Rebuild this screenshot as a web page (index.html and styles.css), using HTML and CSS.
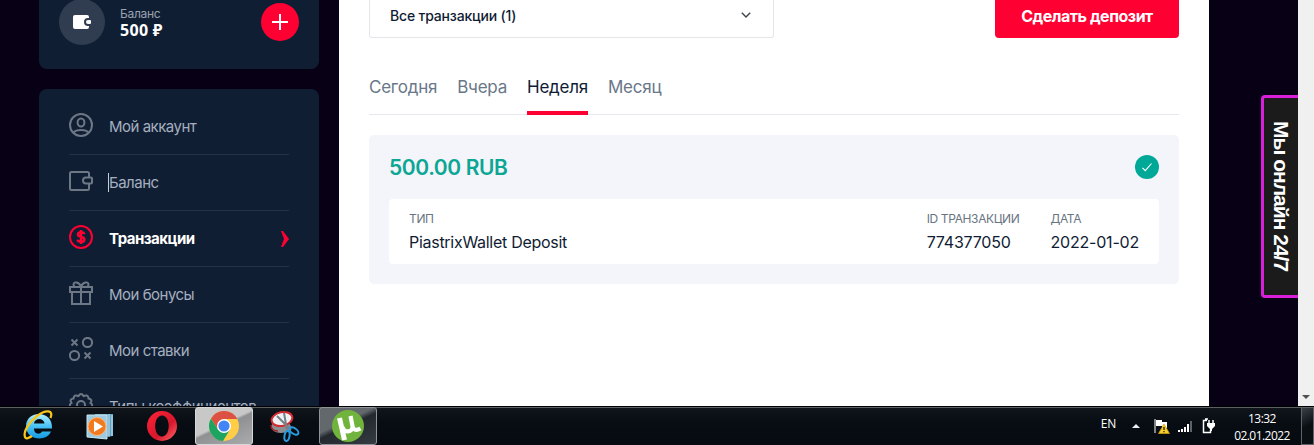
FILE: index.html
```
<!DOCTYPE html>
<html lang="ru">
<head>
  <meta charset="UTF-8">
  <meta name="viewport" content="width=device-width, initial-scale=1.0">
  <title>Транзакции</title>
  <link rel="stylesheet" href="styles.css">
</head>
<body>
  <div class="browser">
    <div class="page">
      <aside class="sidebar">
        <div class="balance">
          <div class="balance-icon">
            <svg width="18" height="14" viewBox="0 0 18 14">
              <path d="M2 0H14Q16 0 16 2V3H15A4 4 0 0 0 15 11H16V12Q16 14 14 14H2Q0 14 0 12V2Q0 0 2 0Z" fill="#fff"/>
              <path d="M15 5H17Q18 5 18 6V8Q18 9 17 9H15A2 2 0 0 1 15 5Z" fill="#fff"/>
            </svg>
          </div>
          <div class="balance-info">
            <span class="balance-label">Баланс</span>
            <span class="balance-value">500 ₽</span>
          </div>
          <button class="balance-add">
            <svg width="16" height="16" viewBox="0 0 16 16"><path d="M8 0V16M0 8H16" stroke="#fff" stroke-width="2"/></svg>
          </button>
        </div>
        <nav class="menu">
          <a class="menu-item">
            <svg class="menu-icon" viewBox="0 0 24 24">
              <circle cx="12" cy="12" r="11"/>
              <ellipse cx="12" cy="9.5" rx="3.4" ry="4"/>
              <path d="M4.5 19.5C7 16 17 16 19.5 19.5"/>
            </svg>
            <span>Мой аккаунт</span>
          </a>
          <a class="menu-item">
            <svg class="menu-icon" viewBox="0 0 24 24">
              <path d="M20 8V4.5Q20 3 18.500 3H2.500Q1 3 1 4.500V19.500Q1 21 2.500 21H18.500Q20 21 20 19.500V15"/>
              <path d="M17 8.500H22Q23 8.500 23 9.500V13.500Q23 14.500 22 14.500H17A3 3 0 0 1 17 8.500Z"/>
            </svg>
            <span class="caret">Баланс</span>
          </a>
          <a class="menu-item active">
            <svg class="menu-icon" viewBox="0 0 24 24">
              <circle cx="12" cy="12" r="11"/>
              <path class="dollar" d="M15.200 9.200C15 7.800 13.700 7.200 12 7.200C10.200 7.200 8.900 8 8.900 9.500C8.900 13 15.400 10.800 15.400 14.400C15.400 16 13.900 16.800 12 16.800C10.200 16.800 8.800 16.100 8.600 14.600M12 5V19"/>
            </svg>
            <span>Транзакции</span>
            <svg class="menu-arrow" width="8" height="16" viewBox="0 0 8 16"><path d="M0 0H2L8 8L2 16H0L3 8Z" fill="#ff0033"/></svg>
          </a>
          <a class="menu-item">
            <svg class="menu-icon" viewBox="0 0 24 24">
              <path d="M1 6H23V11H1ZM3 11V23H21V11M12 6V23"/>
              <path d="M12 5.500C10 1 5 .3 4.500 3.200C4.300 4.500 5 5.300 6 6M12 5.500C14 1 19 .3 19.500 3.200C19.700 4.500 19 5.300 18 6"/>
            </svg>
            <span>Мои бонусы</span>
          </a>
          <a class="menu-item">
            <svg class="menu-icon" viewBox="0 0 24 24">
              <circle cx="18.500" cy="5.500" r="4.600"/>
              <circle cx="5.500" cy="18.500" r="4.600"/>
              <path d="M2.500 2.500L8.500 8.500M8.500 2.500L2.500 8.500M15.500 15.500L21.500 21.500M21.500 15.500L15.500 21.500"/>
            </svg>
            <span>Мои ставки</span>
          </a>
          <a class="menu-item">
            <svg class="menu-icon" viewBox="0 0 24 24">
              <path d="M9.500 3Q12 -1 14.500 3Q19.500 1 19.500 5.500Q24 6.500 21.500 10Q25 12 21.500 14.500Q23 19 19 19Q17 23 14 21Q12 25 9.500 21Q5 23 5 19Q0 18 2.500 14.500Q-1 12 2.500 10Q0 6 4.500 5.500Q5 1 9.500 3Z"/>
              <circle cx="12" cy="12" r="4"/>
            </svg>
            <span>Типы коэффициентов</span>
          </a>
        </nav>
      </aside>

      <main class="content">
        <div class="toolbar">
          <div class="select">
            <span>Все транзакции (1)</span>
            <svg width="10" height="6" viewBox="0 0 10 6"><path d="M.8 .8L5 5L9.200 .8" fill="none" stroke="#3c434b" stroke-width="1.400"/></svg>
          </div>
          <button class="deposit">Сделать депозит</button>
        </div>
        <div class="tabs">
          <a class="tab">Сегодня</a>
          <a class="tab">Вчера</a>
          <a class="tab selected">Неделя</a>
          <a class="tab">Месяц</a>
        </div>
        <section class="transaction">
          <div class="transaction-head">
            <span class="amount">500.00 RUB</span>
            <svg width="24" height="24" viewBox="0 0 24 24">
              <circle cx="12" cy="12" r="12" fill="#00a997"/>
              <path d="M7.500 12.800L10.300 15.600L16.500 8.500" fill="none" stroke="#fff" stroke-width="1.100"/>
            </svg>
          </div>
          <div class="details">
            <div class="detail detail-type"><span class="detail-label">ТИП</span><span class="detail-value">PiastrixWallet Deposit</span></div>
            <div class="detail detail-id"><span class="detail-label">ID ТРАНЗАКЦИИ</span><span class="detail-value">774377050</span></div>
            <div class="detail"><span class="detail-label">ДАТА</span><span class="detail-value">2022-01-02</span></div>
          </div>
        </section>
      </main>

      <div class="chat">Мы онлайн 24/7</div>
    </div>
    <div class="scrollbar">
      <svg width="8" height="4" viewBox="0 0 8 4"><path d="M0 0H8L4 4Z" fill="#505050"/></svg>
    </div>
  </div>

  <footer class="taskbar">
    <div class="apps">
      <div class="app">
        <svg width="34" height="34" viewBox="1 1 34 34">
          <defs>
            <linearGradient id="ie" x1="0" y1="0" x2="0" y2="1"><stop offset="0" stop-color="#b5efff"/><stop offset=".5" stop-color="#48c1f5"/><stop offset="1" stop-color="#159be0"/></linearGradient>
          </defs>
          <path d="M31 23.500C27 34 6 33 6 18C6 2 33 1 32 20.500H14C14 26.500 20 27 22 23.500ZM14 15.500H24.500C24 9.500 14.500 9.500 14 15.500Z" fill="url(#ie)" fill-rule="evenodd"/>
          <path d="M30.500 10C34 2 26 1 17 8C9 14 3 24 5 29C6 31.500 9 30 12 28" fill="none" stroke="#f7c51b" stroke-width="2.300"/>
        </svg>
      </div>
      <div class="app">
        <svg width="30" height="30" viewBox="0 0 30 30">
          <path d="M10 3H28V25L10 27Z" fill="#659fc0"/>
          <path d="M24 3V26M27 4V25" stroke="#c5e9f7" stroke-width="1"/>
          <path d="M2 4H22V28L2 26Z" fill="#9acbe2" stroke="#c8e5ef"/>
          <circle cx="12" cy="15.500" r="9" fill="#f17a20" stroke="#ffb576"/>
          <path d="M9 10L18 15.500L9 21Z" fill="#fff"/>
        </svg>
      </div>
      <div class="app">
        <svg width="30" height="30" viewBox="0 0 30 30">
          <defs><linearGradient id="opera" x1="0" y1="0" x2="1" y2="1"><stop offset="0" stop-color="#ff2339"/><stop offset=".6" stop-color="#d6172b"/><stop offset="1" stop-color="#ff6b6b"/></linearGradient></defs>
          <path d="M15 0A15 15 0 0 0 15 30A15 15 0 0 0 15 0ZM15 4.500C24 4.500 24 25.500 15 25.500C6 25.500 6 4.500 15 4.500Z" fill="url(#opera)" fill-rule="evenodd"/>
        </svg>
      </div>
      <div class="app app-open">
        <svg width="30" height="30" viewBox="0 0 30 30">
          <circle cx="15" cy="15" r="15" fill="#ffcd46"/>
          <path d="M15 8H28.300A15 15 0 0 0 2 7.500L9 18.500L15 8Z" fill="#dd5145"/>
          <path d="M2 7.500A15 15 0 0 0 14 30L21 18.500H9Z" fill="#1da462"/>
          <circle cx="15" cy="15" r="7" fill="#fff"/>
          <circle cx="15" cy="15" r="5.600" fill="#4285f4"/>
        </svg>
      </div>
      <div class="app">
        <svg width="30" height="32" viewBox="0 0 30 32">
          <ellipse cx="11" cy="17" rx="10" ry="6" fill="#8c8f92"/>
          <path d="M1 15C1 18 3 21 8 21" fill="none" stroke="#a32025" stroke-width="1.500"/>
          <ellipse cx="12" cy="9" rx="10.500" ry="6.800" fill="#eef1f4" stroke="#d42b31" stroke-width="2" transform="rotate(-12 12 9)"/>
          <path d="M7 6L21 20M14 3L17 20" stroke="#777f87" stroke-width="2"/>
          <ellipse cx="24" cy="21" rx="5" ry="2.800" fill="none" stroke="#289be0" stroke-width="2" transform="rotate(35 24 21)"/>
          <ellipse cx="17" cy="26" rx="2.500" ry="5" fill="none" stroke="#289be0" stroke-width="2" transform="rotate(10 17 26)"/>
        </svg>
      </div>
      <div class="app app-running">
        <svg width="32" height="32" viewBox="0 0 32 32">
          <circle cx="16" cy="16" r="16" fill="#70b33d"/>
          <path d="M7.500 8L12.500 30" fill="none" stroke="#fff" stroke-width="5"/>
          <path d="M10.500 17C12 23.500 21 22.500 20.500 16L18.500 6M20 14C21 20.500 24 21 28.500 18.500" fill="none" stroke="#fff" stroke-width="4.200"/>
        </svg>
      </div>
    </div>
    <div class="tray">
      <span class="lang">EN</span>
      <svg class="tray-up" width="8" height="4" viewBox="0 0 8 4"><path d="M0 4L4 0L8 4Z" fill="#e8eef4"/></svg>
      <svg class="tray-flag" width="16" height="16" viewBox="0 0 16 16">
        <path d="M1 1V15" stroke="#fff"/><path d="M2 2H8V4H13V10H8V8H2Z" fill="#fff"/>
        <path d="M10 6L15.500 15.500H4.500Z" fill="#f4cf28" stroke="#d59c12" stroke-width=".7"/><path d="M10 9V12M10 13V14.300" stroke="#332a10" stroke-width="1.400"/>
      </svg>
      <svg class="tray-net" width="14" height="12" viewBox="0 0 14 12"><path d="M0 10H2V12H0ZM3 9H5V12H3ZM6 7H8V12H6ZM9 4H11V12H9Z" fill="#fff"/><path d="M12 1H14V12H12Z" fill="#59636a"/></svg>
      <svg class="tray-power" width="13" height="16" viewBox="0 0 13 16">
        <path d="M5 2.500H1.500V14.500H8.500V12M3 1H6" fill="none" stroke="#fff" stroke-width="1.500"/>
        <path d="M7 2V5M11 2V5" stroke="#fff" stroke-width="1.500"/><path d="M5 5H13V8L10 11V13H8V11L5 8Z" fill="#fff"/>
      </svg>
      <div class="clock"><span>13:32</span><span>02.01.2022</span></div>
      <div class="show-desktop"></div>
    </div>
  </footer>
</body>
</html>
```
FILE: styles.css
```
* {
  box-sizing: border-box;
}
body {
  margin: 0;
  height: 445px;
  overflow: hidden;
  display: flex;
  flex-direction: column;
  font-family: Inter, "Liberation Sans", sans-serif;
  background: #080014;
}
button {
  border: none;
  padding: 0;
  font-family: inherit;
  cursor: pointer;
}
svg {
  display: block;
  flex-shrink: 0;
}
.browser {
  display: flex;
  height: 406px;
  overflow: hidden;
}
.page {
  display: flex;
  flex: 1;
  padding-left: 39px;
}
.sidebar {
  width: 280px;
  margin-right: 20px;
  display: flex;
  flex-direction: column;
  gap: 20px;
}
.balance {
  display: flex;
  align-items: center;
  height: 69px;
  padding: 0 20px 25px;
  background: #101e34;
  border-radius: 0 0 8px 8px;
  flex-shrink: 0;
}
.balance-icon {
  display: flex;
  align-items: center;
  justify-content: center;
  width: 46px;
  height: 46px;
  border-radius: 50%;
  background: #303d50;
}
.balance-info {
  display: flex;
  flex-direction: column;
  flex: 1;
  margin-left: 15px;
}
.balance-label {
  font-size: 12px;
  line-height: 16px;
  letter-spacing: -0.3px;
  color: #9aa3b0;
}
.balance-value {
  font-family: "Noto Sans", sans-serif;
  font-size: 16px;
  line-height: 17px;
  letter-spacing: 0.3px;
  font-weight: 700;
  color: #fff;
}
.balance-add {
  display: flex;
  align-items: center;
  justify-content: center;
  width: 38px;
  height: 38px;
  border-radius: 50%;
  background: #ff0033;
}
.menu {
  padding: 10px 30px;
  background: #101e34;
  border-radius: 8px 8px 0 0;
}
.menu-item {
  display: flex;
  align-items: center;
  height: 56px;
  border-bottom: 1px solid #22304a;
  font-size: 15px;
  letter-spacing: -0.5px;
  color: #a5afbf;
}
.menu-icon {
  width: 24px;
  height: 24px;
  margin: 0 16px 3px 0;
  fill: none;
  stroke: #6d7785;
  stroke-width: 2;
}
.menu-item.active {
  color: #fff;
  font-weight: 700;
}
.active .menu-icon {
  stroke: #ff0033;
}
.active .dollar {
  stroke-width: 2.4;
}
.menu-arrow {
  margin-left: auto;
}
.caret {
  box-shadow: -1px 0 #c8ced6;
}
.content {
  width: 870px;
  padding: 0 30px;
  background: #fff;
}
.toolbar {
  display: flex;
  justify-content: space-between;
  height: 38px;
}
.select {
  display: flex;
  align-items: center;
  justify-content: space-between;
  width: 405px;
  padding: 0 22px 7px 20px;
  border: 1px solid #e4e6ea;
  border-top: none;
  border-radius: 0 0 3px 3px;
  font-size: 14px;
  font-weight: 500;
  letter-spacing: -0.18px;
  color: #101c33;
}
.deposit {
  width: 184px;
  padding-bottom: 7px;
  border-radius: 0 0 4px 4px;
  background: #ff0033;
  color: #fff;
  font-size: 16px;
  font-weight: 700;
  letter-spacing: -0.48px;
}
.tabs {
  display: flex;
  gap: 20px;
  height: 77px;
  border-bottom: 1px solid #e5e6ee;
}
.tab {
  height: 77px;
  padding-top: 39px;
  font-size: 17px;
  line-height: 21px;
  letter-spacing: -0.23px;
  color: #697788;
}
.tab.selected {
  color: #101c33;
  border-bottom: 4px solid #ff0033;
}
.transaction {
  height: 149px;
  margin-top: 20px;
  padding: 20px;
  border-radius: 5px;
  background: #f4f5fa;
}
.transaction-head {
  display: flex;
  align-items: center;
  justify-content: space-between;
  height: 24px;
}
.amount {
  font-size: 21px;
  font-weight: 600;
  letter-spacing: -0.4px;
  color: #0ca694;
}
.details {
  display: flex;
  height: 65px;
  margin-top: 20px;
  padding: 11px 20px;
  border-radius: 4px;
  background: #fff;
}
.detail {
  display: flex;
  flex-direction: column;
}
.detail-type {
  flex: 1;
}
.detail-id {
  margin-right: 31px;
}
.detail-label {
  font-size: 12px;
  line-height: 18px;
  letter-spacing: -0.36px;
  color: #697481;
}
.detail-value {
  margin-top: 3px;
  font-size: 16px;
  line-height: 22px;
  letter-spacing: -0.2px;
  color: #101c33;
}
.detail-type .detail-value {
  letter-spacing: -0.28px;
}
.chat {
  display: flex;
  align-items: center;
  justify-content: center;
  width: 37px;
  height: 203px;
  margin: 95px 0 0 auto;
  border: 3px solid #d91fd9;
  border-right: none;
  border-radius: 4px 0 0 4px;
  background: #1b1b1b;
  color: #fff;
  font-family: "Liberation Sans", Arial, sans-serif;
  font-size: 21px;
  font-weight: 700;
  letter-spacing: -1px;
  writing-mode: vertical-rl;
  white-space: nowrap;
}
.scrollbar {
  display: flex;
  align-items: flex-end;
  justify-content: center;
  width: 16px;
  padding-bottom: 7px;
  background: #f0f0f0;
}
.taskbar {
  display: flex;
  justify-content: space-between;
  height: 39px;
  border-top: 1px solid #000;
  box-shadow: inset 0 1px #5b6064;
  background: linear-gradient(#10161c, #070d12 40%, #050b10);
}
.apps {
  display: flex;
  padding-left: 9px;
}
.app {
  display: flex;
  align-items: center;
  justify-content: center;
  width: 58px;
  height: 38px;
  margin-right: 4px;
}
.app-open {
  margin-right: 3px;
  border: 1px solid #d5d8da;
  border-radius: 3px;
  background: linear-gradient(155deg, #c8c8c8 45%, #8e9091 50%, #a9abac);
}
.app-running {
  margin-left: 1px;
  border: 1px solid #8e9498;
  border-radius: 3px;
  background: linear-gradient(155deg, #63686c 40%, #22282e 50%, #353c42);
}
.tray {
  display: flex;
  align-items: center;
  font-family: "Open Sans", "Noto Sans", sans-serif;
  font-size: 12px;
  color: #fff;
}
.lang {
  margin-right: 16px;
  margin-bottom: 5px;
  letter-spacing: -0.2px;
}
.tray-up {
  margin-right: 14px;
}
.tray-flag {
  margin-right: 8px;
}
.tray-net {
  margin-right: 10px;
}
.tray-power {
  margin-right: 19px;
}
.clock {
  display: flex;
  flex-direction: column;
  align-items: center;
  width: 56px;
  margin-right: 11px;
  padding-top: 1px;
  line-height: 17px;
  letter-spacing: -0.55px;
}
.show-desktop {
  width: 13px;
  height: 38px;
  border: 1px solid #5d6367;
  background: linear-gradient(150deg, #3a4045, #0a0f14 50%);
}
```
